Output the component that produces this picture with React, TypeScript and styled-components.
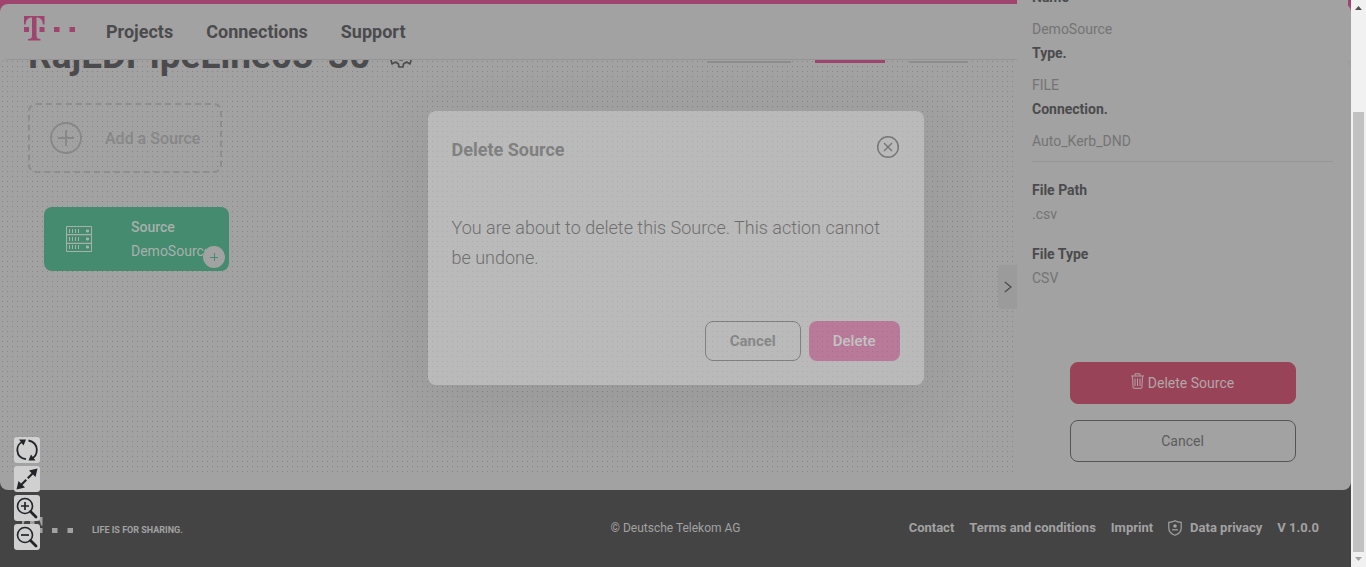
import React from "react";
import styled, { createGlobalStyle } from "styled-components";

const surface = "#a2a2a2";
const magenta = "#9e446f";
const ink = "#4b4b4d";
const muted = "#747474";
const footerBg = "#444444";

const GlobalStyle = createGlobalStyle`
  *, *::before, *::after { box-sizing: border-box; }
  body { margin: 0; overflow: hidden; font-family: Roboto, "Liberation Sans", sans-serif; color: ${ink}; }
  button { font: inherit; color: inherit; padding: 0; border: 0; background: none; cursor: pointer; }
  a { color: inherit; text-decoration: none; }
  h1, h2, p, dl, dt, dd { margin: 0; }
  svg { display: block; flex: none; }
`;

const Shell = styled.div`
  display: flex;
  min-height: 100vh;
`;

const Page = styled.div`
  position: relative;
  flex: 1;
  min-width: 0;
  display: flex;
  flex-direction: column;
  padding-top: 4px;
  background: linear-gradient(${magenta} 20px, ${footerBg} 20px);
`;

const Surface = styled.div`
  flex: 1;
  display: flex;
  flex-direction: column;
  border-radius: 8px;
  background: ${surface};
`;

const Header = styled.header`
  display: flex;
  align-items: flex-start;
  height: 55px;
  padding: 12px 24px 0;
`;

const Nav = styled.nav`
  display: flex;
  gap: 33px;
  margin: 4px 0 0 30px;
  font-size: 18px;
  line-height: 24px;
  font-weight: 700;
`;

const Canvas = styled.main`
  flex: 1;
  display: flex;
  flex-direction: column;
  overflow: hidden;
  border-top: 1px solid #949494;
  border-radius: 8px;
  padding-bottom: 18px;
`;

/* One-pixel dots every 5px: vertical stripes masked by horizontal bands. */
const Grid = styled.div`
  flex: 1;
  margin-right: 338px;
  background-image:
    linear-gradient(${surface} 4px, transparent 4px),
    linear-gradient(90deg, ${surface} 4px, #858585 4px);
  background-size: 5px 5px;
  background-position: -2px -3px;
`;

const TitleRow = styled.div`
  display: flex;
  justify-content: space-between;
  align-items: flex-end;
  height: 54px;
  margin-top: -36px;
  padding: 0 45px 0 28px;
`;

const Title = styled.h1`
  display: flex;
  gap: 20px;
  align-items: center;
  font-size: 37px;
  line-height: 44px;
  font-weight: 700;

  svg { margin-top: 2px; }
`;

const Tabs = styled.div`
  display: flex;
  align-items: flex-end;
  gap: 24px;
  height: 39px;
  align-self: flex-start;
`;

const Tab = styled.span<{ $width: number; $active?: boolean }>`
  width: ${(p) => p.$width}px;
  border-bottom: ${(p) => (p.$active ? `3px solid ${magenta}` : "2px solid #8d8d8d")};
`;

const AddSource = styled.button`
  display: flex;
  align-items: center;
  gap: 23px;
  width: 194px;
  height: 70px;
  margin: 25px 0 0 28px;
  padding-left: 20px;
  border: 2px dashed #8d8d8d;
  border-radius: 8px;
  color: #878787;
  font-size: 16px;
  font-weight: 500;
`;

const SourceCard = styled.div`
  position: relative;
  display: flex;
  align-items: center;
  gap: 39px;
  width: 185px;
  height: 64px;
  margin: 34px 0 0 44px;
  padding-left: 22px;
  border-radius: 8px;
  background: #458b6f;
  color: #a8b0ac;
`;

const SourceText = styled.div`
  width: 75px;
  overflow: hidden;
  font-size: 14px;
  line-height: 24px;
  white-space: nowrap;
`;

const SourceType = styled.div`
  font-weight: 500;
`;

const AddStep = styled.button`
  position: absolute;
  right: 4px;
  bottom: 3px;
  display: grid;
  place-items: center;
  width: 22px;
  height: 22px;
  border-radius: 50%;
  background: ${surface};
`;

const Drawer = styled.aside`
  position: absolute;
  top: 0;
  right: 3px;
  width: 331px;
  padding: 0 15px;
  overflow: hidden;
  background: ${surface};
  font-size: 14px;
  line-height: 24px;
`;

const Details = styled.dl`
  margin-top: -15px;
  padding-bottom: 8px;
  border-bottom: 1px solid #959595;
`;

const Label = styled.dt`
  font-weight: 700;
`;

const Value = styled.dd<{ $gap?: number }>`
  margin-top: ${(p) => p.$gap ?? 0}px;
  color: ${muted};
`;

const FileDetails = styled.dl`
  padding-top: 16px;
  display: flex;
  flex-direction: column;
  gap: 16px;
`;

const DrawerActions = styled.div`
  display: flex;
  flex-direction: column;
  align-items: center;
  gap: 16px;
  margin-top: 72px;
  padding-bottom: 16px;
`;

const DrawerButton = styled.button<{ $danger?: boolean }>`
  display: flex;
  align-items: center;
  justify-content: center;
  gap: 4px;
  width: 226px;
  height: 42px;
  border-radius: 8px;
  border: 1px solid ${(p) => (p.$danger ? "#984357" : "#555555")};
  background: ${(p) => (p.$danger ? "#984357" : "transparent")};
  color: ${(p) => (p.$danger ? "#b3a6aa" : "#5c5c5c")};

  svg { margin-bottom: 4px; }
`;

const DrawerHandle = styled.button`
  position: absolute;
  top: 265px;
  right: 334px;
  display: grid;
  place-items: center;
  width: 19px;
  height: 44px;
  border-radius: 4px 0 0 4px;
  background: #9b9b9b;
`;

const Overlay = styled.div`
  position: absolute;
  inset: 0;
  display: flex;
  justify-content: center;
  align-items: flex-start;
  padding-top: 111px;
  pointer-events: none;
`;

const Dialog = styled.section`
  width: 496px;
  padding: 24px;
  border-radius: 8px;
  background: #d3d3d3;
  box-shadow: 0 16px 56px rgba(0, 0, 0, 0.1);
  opacity: 0.5;
  color: #606060;
  pointer-events: auto;
`;

const DialogHead = styled.div`
  display: flex;
  justify-content: space-between;
  align-items: flex-start;
`;

const DialogTitle = styled.h2`
  padding-top: 3px;
  font-size: 18px;
  line-height: 24px;
  font-weight: 700;
`;

const DialogText = styled.p`
  margin-top: 51px;
  font-size: 18px;
  line-height: 30px;
  font-weight: 300;
  color: #3c3c3c;
`;

const DialogActions = styled.div`
  display: flex;
  justify-content: flex-end;
  gap: 8px;
  margin-top: 48px;
`;

const DialogButton = styled.button<{ $primary?: boolean }>`
  height: 40px;
  padding: 0 24px;
  border-radius: 8px;
  border: ${(p) => (p.$primary ? "0" : "1px solid #606060")};
  background: ${(p) => (p.$primary ? "#ce5490" : "transparent")};
  color: ${(p) => (p.$primary ? "#e4e4e4" : "#6e6e6e")};
  font-size: 15px;
  font-weight: ${(p) => (p.$primary ? 500 : 700)};
`;

const Tools = styled.div`
  position: absolute;
  left: 14px;
  bottom: 17px;
  display: flex;
  flex-direction: column;
  gap: 3px;
`;

const Tool = styled.button`
  display: grid;
  place-items: center;
  width: 26px;
  height: 26px;
  border-radius: 3px;
  background: #d0d0d0;
  color: #212529;
`;

const Footer = styled.footer`
  display: grid;
  grid-template-columns: 1fr auto 1fr;
  align-items: center;
  height: 77px;
  padding: 0 22px 2px;
  color: #a2a2a2;
  font-size: 12px;
  line-height: 18px;
`;

const Brand = styled.div`
  display: flex;
  align-items: center;
  gap: 18px;
  padding-top: 4px;
  font-size: 9px;
  font-weight: 700;
`;

const Copyright = styled.span`
  font-size: 12px;
`;

const FooterLinks = styled.nav`
  display: flex;
  justify-content: flex-end;
  gap: 15px;
  padding-right: 10px;
  font-size: 13px;
  font-weight: 700;
`;

const PrivacyLink = styled.a`
  display: flex;
  align-items: center;
  gap: 8px;
`;

const Scrollbar = styled.div`
  display: flex;
  flex-direction: column;
  align-items: center;
  justify-content: space-between;
  width: 15px;
  padding: 5px 0;
  background: #f1f1f1;
`;

const Thumb = styled.div`
  flex: 1;
  width: 11px;
  margin: 102px 0 5px;
  background: #c1c1c1;
`;

function Logo({ color }: { color: string }) {
  return (
    <svg width="52" height="25" viewBox="0 0 52 25" fill={color}>
      <path d="M0 0H20.500V8.500L19 8.500C18.500 4 16.500 1.500 12.500 1.500V19.500C12.500 22 13.500 23 16.500 23V24.500H4V23C7 23 8 22 8 19.500V1.500C4 1.500 2 4 1.500 8.500L0 8.500Z" />
      <path d="M0 11H5V16H0ZM15.500 11H20.500V16H15.500ZM30 11H35.500V16H30ZM45.500 11H51V16H45.500Z" />
    </svg>
  );
}

function GearIcon() {
  return (
    <svg width="22" height="22" viewBox="0 0 22 22" fill="none" stroke={ink} strokeWidth="1.600" strokeLinejoin="round">
      <path d="M9 1h4l.5 3 3 2L20 4l1 4-2.500 3L21 14l-1 4-3.500-2-3 2-.5 3H9l-.5-3-3-2L2 18l-1-4 2.500-3L1 8l1-4 3.500 2 3-2Z" />
      <circle cx="11" cy="11" r="3" />
    </svg>
  );
}

function ServerIcon() {
  return (
    <svg width="26" height="26" viewBox="0 0 26 26" fill="none" stroke="#a8b0ac">
      <path d="M.5.500h25v25H.5ZM.5 8.500h25M.5 17.500h25" />
      <path d="M.5 9h25M.5 17h25" strokeOpacity=".5" />
      <path d="M3.500 3v4M6.500 3v4M9.500 3v4M12.500 3v4M3.500 11v4M6.500 11v4M9.500 11v4M12.500 11v4M3.500 19v4M6.500 19v4M9.500 19v4M12.500 19v4" />
      <path d="M20 5h3M21.500 3.500v3M20 13h3M21.500 11.500v3M20 21h3M21.500 19.500v3" strokeWidth="2" />
    </svg>
  );
}

function TrashIcon() {
  return (
    <svg width="13" height="16" viewBox="0 0 13 16" fill="none" stroke="#b3a6aa">
      <path d="M0 3h13M4 2.500V.8h5v1.700M1.500 3.500l.6 11c0 .5.400.8.9.8h7c.5 0 .9-.3.9-.8l.6-11M4 5.500v7.500M6.500 5.500v7.500M9 5.500v7.500" />
    </svg>
  );
}

function ShieldIcon() {
  return (
    <svg width="14" height="16" viewBox="0 0 14 16" fill="none" stroke="#a2a2a2" strokeWidth="1.200">
      <path d="M7 .8C5.300 1.800 3.300 2.300.8 2.300V8c0 3.500 2.500 5.900 6.200 7.200 3.700-1.300 6.200-3.700 6.200-7.200V2.300C10.700 2.300 8.700 1.800 7 .8Z" />
      <circle cx="7" cy="6" r="1.800" fill="#a2a2a2" stroke="none" />
      <path d="M4 9.800h6" />
    </svg>
  );
}

function RefreshIcon() {
  return (
    <svg width="22" height="22" viewBox="0 0 22 22" fill="none" stroke="currentColor" strokeWidth="1.800">
      <path d="M10 20.200C-1 18.500-1 5.500 7 2.500M12.500 1.500C23.500 4 22.500 16.500 15.500 19.500" />
      <path d="M3 .5h7L7.500 6.500ZM19.500 21.500h-7L15 15.500Z" fill="currentColor" stroke="none" />
    </svg>
  );
}

function ExpandIcon() {
  return (
    <svg width="22" height="22" viewBox="0 0 22 22" fill="currentColor">
      <path d="M21.500.5 19.500 9 17 6.500 12.500 11 11 9.500 15.500 5 13 2.500ZM.5 21.500 2.500 13 5 15.500 9.500 11 11 12.500 6.500 17 9 19.500Z" />
    </svg>
  );
}

function ZoomIcon({ plus }: { plus?: boolean }) {
  return (
    <svg width="22" height="22" viewBox="0 0 22 22" fill="none" stroke="currentColor">
      <circle cx="9" cy="9" r="7.500" strokeWidth="1.600" />
      <path d="M14.500 14.500 20 20" strokeWidth="2.800" strokeLinecap="round" />
      <path d={plus ? "M5 9h8M9 5v8" : "M5 9h8"} strokeWidth="1.700" />
    </svg>
  );
}

export default function App() {
  return (
    <>
      <GlobalStyle />
      <Shell>
        <Page>
          <Surface>
            <Header>
              <Logo color={magenta} />
              <Nav>
                <a href="#projects">Projects</a>
                <a href="#connections">Connections</a>
                <a href="#support">Support</a>
              </Nav>
            </Header>
            <Canvas>
              <Grid>
                <TitleRow>
                  <Title>
                    RajEDPipeLine03-30
                    <GearIcon />
                  </Title>
                  <Tabs>
                    <Tab $width={84} />
                    <Tab $width={70} $active />
                    <Tab $width={59} />
                  </Tabs>
                </TitleRow>
                <AddSource>
                  <svg width="32" height="32" viewBox="0 0 32 32" fill="none" stroke="#878787" strokeWidth="1.800">
                    <circle cx="16" cy="16" r="15" />
                    <path d="M8 16h16M16 8v16" />
                  </svg>
                  Add a Source
                </AddSource>
                <SourceCard>
                  <ServerIcon />
                  <SourceText>
                    <SourceType>Source</SourceType>
                    <div>DemoSource</div>
                  </SourceText>
                  <AddStep>
                    <svg width="8" height="8" viewBox="0 0 8 8" stroke="#458b6f">
                      <path d="M0 4.500h8M4.500 0v8" />
                    </svg>
                  </AddStep>
                </SourceCard>
              </Grid>
            </Canvas>
          </Surface>

          <Footer>
            <Brand>
              <Logo color="#a2a2a2" />
              LIFE IS FOR SHARING.
            </Brand>
            <Copyright>© Deutsche Telekom AG</Copyright>
            <FooterLinks>
              <a href="#contact">Contact</a>
              <a href="#terms">Terms and conditions</a>
              <a href="#imprint">Imprint</a>
              <PrivacyLink href="#privacy">
                <ShieldIcon />
                Data privacy
              </PrivacyLink>
              <span>V 1.0.0</span>
            </FooterLinks>
          </Footer>

          <Drawer>
            <Details>
              <Label>Name</Label>
              <Value $gap={8}>DemoSource</Value>
              <Label>Type.</Label>
              <Value $gap={8}>FILE</Value>
              <Label>Connection.</Label>
              <Value $gap={8}>Auto_Kerb_DND</Value>
            </Details>
            <FileDetails>
              <div>
                <Label>File Path</Label>
                <Value>.csv</Value>
              </div>
              <div>
                <Label>File Type</Label>
                <Value>CSV</Value>
              </div>
            </FileDetails>
            <DrawerActions>
              <DrawerButton $danger>
                <TrashIcon />
                Delete Source
              </DrawerButton>
              <DrawerButton>Cancel</DrawerButton>
            </DrawerActions>
          </Drawer>
          <DrawerHandle>
            <svg width="8" height="12" viewBox="0 0 8 12" fill="none" stroke={ink} strokeWidth="1.200">
              <path d="M.8 1 7 6 .8 11" />
            </svg>
          </DrawerHandle>

          <Overlay>
            <Dialog role="dialog">
              <DialogHead>
                <DialogTitle>Delete Source</DialogTitle>
                <button>
                  <svg width="24" height="24" viewBox="0 0 24 24" fill="none" stroke="#505050" strokeWidth="1.500">
                    <circle cx="12" cy="12" r="10.300" />
                    <path d="m8 8 8 8M16 8l-8 8" />
                  </svg>
                </button>
              </DialogHead>
              <DialogText>You are about to delete this Source. This action cannot be undone.</DialogText>
              <DialogActions>
                <DialogButton>Cancel</DialogButton>
                <DialogButton $primary>Delete</DialogButton>
              </DialogActions>
            </Dialog>
          </Overlay>

          <Tools>
            <Tool><RefreshIcon /></Tool>
            <Tool><ExpandIcon /></Tool>
            <Tool><ZoomIcon plus /></Tool>
            <Tool><ZoomIcon /></Tool>
          </Tools>
        </Page>
        <Scrollbar>
          <svg width="7" height="5" viewBox="0 0 7 5" fill="#505050"><path d="M3.500 1 7 5H0Z" /></svg>
          <Thumb />
          <svg width="7" height="5" viewBox="0 0 7 5" fill="#a3a3a3"><path d="M3.500 4 7 0H0Z" /></svg>
        </Scrollbar>
      </Shell>
    </>
  );
}
